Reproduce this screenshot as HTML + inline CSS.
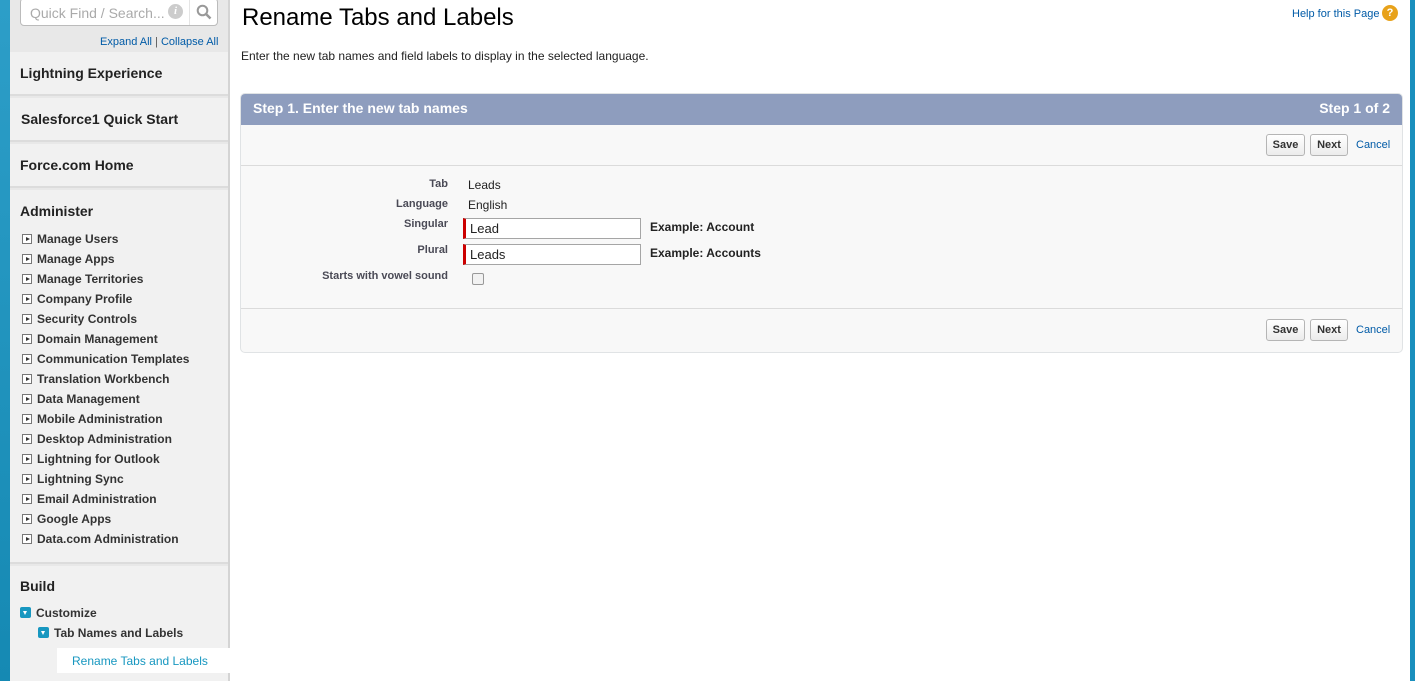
<!DOCTYPE html>
<html><head><style>
*{margin:0;padding:0;box-sizing:border-box}
body{width:1415px;height:681px;overflow:hidden;background:#fff;font-family:"Liberation Sans",Arial,sans-serif;font-size:12px;color:#222;position:relative}
.a{position:absolute}
.lb{left:0;top:0;width:10px;height:681px;background:linear-gradient(#2d9ec8,#1589b3)}
.rb{left:1410px;top:0;width:5px;height:681px;background:#1a8fbd}
.sb{left:10px;top:0;width:220px;height:681px;background:#e8e8e8;border-right:2px solid #d4d4d4}
.sec{left:10px;width:218px;background:#f1f1f1;border-bottom:2px solid #dcdcdc}
.h{font-weight:bold;font-size:14px;color:#222;left:20px}
.tri{display:inline-block;width:10px;height:10px;border:1px solid #777;background:#fff;vertical-align:-1px;margin-right:5px;position:relative}
.tri:after{content:"";position:absolute;left:3px;top:2px;border-left:4px solid #333;border-top:2.5px solid transparent;border-bottom:2.5px solid transparent}
.dn{display:inline-block;width:11px;height:11px;background:#1797c0;border-radius:2px;vertical-align:-1px;margin-right:5px;position:relative}
.dn:after{content:"";position:absolute;left:3px;top:4px;border-top:4px solid #fff;border-left:2.5px solid transparent;border-right:2.5px solid transparent}
.btn{position:absolute;height:22px;border:1px solid #b5b5b5;border-radius:3px;background:linear-gradient(#fff,#ececec);font-weight:bold;font-size:11px;color:#333;text-align:center;line-height:20px}
.cn{position:absolute;color:#015ba7;font-size:11px}
.lab{position:absolute;right:967px;color:#4a4a56;font-size:11px;font-weight:bold;text-align:right}
.inp{position:absolute;left:463px;width:178px;height:21px;border:1px solid #a5a5a5;border-left:3px solid #c00;background:#fff;font-size:13px;padding-left:4px;line-height:19px}
</style></head><body>
<div class="a lb"></div><div class="a rb"></div>
<div class="a sb"></div>
<div class="a" style="left:20px;top:-2px;width:198px;height:28px;border:1px solid #bbb;border-radius:4px;background:#fff"></div>
<div class="a" style="left:30px;top:5px;color:#aaa;font-size:14px">Quick Find / Search...</div>
<div class="a" style="left:168px;top:4px;width:15px;height:15px;border-radius:50%;background:#ccc;color:#fff;font-size:11px;font-weight:bold;font-style:italic;text-align:center;line-height:15px;font-family:'Liberation Serif',serif">i</div>
<div class="a" style="left:189px;top:0;width:1px;height:25px;background:#e5e5e5"></div>
<svg class="a" style="left:196px;top:4px" width="16" height="16"><circle cx="6.5" cy="6.5" r="4.8" fill="none" stroke="#999" stroke-width="2"/><path d="M10 10l4.5 4.5" stroke="#999" stroke-width="2.5"/></svg>
<div class="a" style="left:100px;top:36px;font-size:11px;color:#015ba7">Expand All <span style="color:#555">|</span> Collapse All</div>
<div class="a sec" style="top:52px;height:44px"></div>
<div class="a sec" style="top:98px;height:44px"></div>
<div class="a sec" style="top:144px;height:44px"></div>
<div class="a sec" style="top:190px;height:374px"></div>
<div class="a sec" style="top:566px;height:115px;border:none"></div>
<div class="a h" style="top:65px">Lightning Experience</div>
<div class="a h" style="top:111px;left:21px">Salesforce1 Quick Start</div>
<div class="a h" style="top:157px">Force.com Home</div>
<div class="a h" style="top:203px">Administer</div>
<div class="a" style="left:22px;top:229px;font-size:12px;font-weight:bold;color:#333;line-height:20px">
<div><span class="tri"></span>Manage Users</div><div><span class="tri"></span>Manage Apps</div><div><span class="tri"></span>Manage Territories</div><div><span class="tri"></span>Company Profile</div><div><span class="tri"></span>Security Controls</div><div><span class="tri"></span>Domain Management</div><div><span class="tri"></span>Communication Templates</div><div><span class="tri"></span>Translation Workbench</div><div><span class="tri"></span>Data Management</div><div><span class="tri"></span>Mobile Administration</div><div><span class="tri"></span>Desktop Administration</div><div><span class="tri"></span>Lightning for Outlook</div><div><span class="tri"></span>Lightning Sync</div><div><span class="tri"></span>Email Administration</div><div><span class="tri"></span>Google Apps</div><div><span class="tri"></span>Data.com Administration</div>
</div>
<div class="a h" style="top:578px">Build</div>
<div class="a" style="left:20px;top:606px;font-size:12px;font-weight:bold;color:#333"><span class="dn"></span>Customize</div>
<div class="a" style="left:38px;top:626px;font-size:12px;font-weight:bold;color:#333"><span class="dn"></span>Tab Names and Labels</div>
<div class="a" style="left:57px;top:648px;width:173px;height:25px;background:#fff"></div>
<div class="a" style="left:72px;top:654px;font-size:12px;color:#1797c0">Rename Tabs and Labels</div>

<div class="a" style="left:242px;top:4px;font-size:24px;color:#000">Rename Tabs and Labels</div>
<div class="a" style="left:1292px;top:8px;font-size:11px;color:#015ba7">Help for this Page</div>
<div class="a" style="left:1382px;top:5px;width:16px;height:16px;border-radius:50%;background:#e8a21a;color:#fff;font-weight:bold;font-size:11px;text-align:center;line-height:16px">?</div>
<div class="a" style="left:241px;top:49px;font-size:12px;color:#222">Enter the new tab names and field labels to display in the selected language.</div>

<div class="a" style="left:240px;top:93px;width:1163px;height:260px;border:1px solid #e0e3e5;border-radius:5px;background:#f8f8f8;overflow:hidden">
<div style="height:31px;background:#8e9dbe;color:#fff;font-weight:bold;font-size:14px;line-height:28px;padding:0 12px"><span>Step 1. Enter the new tab names</span><span style="float:right">Step 1 of 2</span></div>
<div class="a" style="left:0;top:71px;width:100%;height:1px;background:#dbdbdb"></div>
<div class="a" style="left:0;top:214px;width:100%;height:1px;background:#dbdbdb"></div>
</div>
<div class="btn" style="left:1266px;top:134px;width:39px">Save</div>
<div class="btn" style="left:1310px;top:134px;width:38px">Next</div>
<div class="cn" style="left:1356px;top:139px">Cancel</div>
<div class="btn" style="left:1266px;top:319px;width:39px">Save</div>
<div class="btn" style="left:1310px;top:319px;width:38px">Next</div>
<div class="cn" style="left:1356px;top:324px">Cancel</div>

<div class="lab" style="top:178px">Tab</div>
<div class="lab" style="top:198px">Language</div>
<div class="lab" style="top:218px">Singular</div>
<div class="lab" style="top:244px">Plural</div>
<div class="lab" style="top:270px">Starts with vowel sound</div>
<div class="a" style="left:468px;top:178px;font-size:12px">Leads</div>
<div class="a" style="left:468px;top:198px;font-size:12px">English</div>
<div class="inp" style="top:218px">Lead</div>
<div class="inp" style="top:244px">Leads</div>
<div class="a" style="left:650px;top:220px;font-weight:bold;font-size:12px">Example: Account</div>
<div class="a" style="left:650px;top:246px;font-weight:bold;font-size:12px">Example: Accounts</div>
<div class="a" style="left:472px;top:273px;width:12px;height:12px;border:1px solid #999;border-radius:2px;background:#f2f2f2"></div>
</body></html>
